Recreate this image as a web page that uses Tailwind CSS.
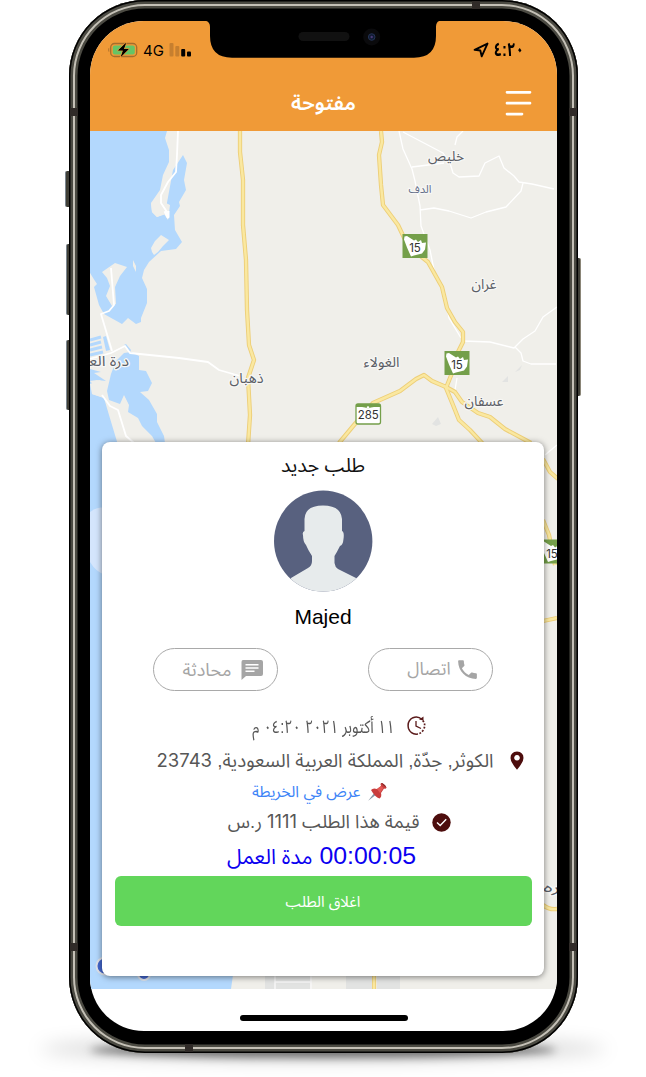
<!DOCTYPE html>
<html lang="ar">
<head>
<meta charset="utf-8">
<title>مفتوحة</title>
<script src="https://cdn.jsdelivr.net/npm/@tailwindcss/browser@4"></script>
</head>
<body class="bg-white">
<main class="relative h-[1077px] w-[646px] overflow-hidden bg-white pl-[69px] font-['Liberation_Sans','Noto_Sans_Arabic','DejaVu_Sans',sans-serif]">
  <!-- ground shadow -->
  <div class="absolute left-[40px] top-[1037px] h-[24px] w-[566px] rounded-[50%] bg-black/15 blur-[9px]"></div>
  <div class="absolute left-[90px] top-[1042px] h-[16px] w-[466px] rounded-[50%] bg-black/50 blur-[4px]"></div>
  <!-- side buttons -->
  <div class="absolute left-[65px] top-[171px] h-[36px] w-[6px] rounded-l-xs border-l border-[#7c8790] bg-[#3f3e36]"></div>
  <div class="absolute left-[66px] top-[244px] h-[71px] w-[5px] rounded-l-xs border-l border-[#7c8790] bg-[#3f3e36]"></div>
  <div class="absolute left-[66px] top-[340px] h-[70px] w-[5px] rounded-l-xs border-l border-[#7c8790] bg-[#3f3e36]"></div>
  <div class="absolute left-[576px] top-[258px] h-[138px] w-[5px] rounded-r-xs border-r border-[#8a8577] bg-[#3f3e36]"></div>

  <div class="relative h-[1053px] w-[509px] rounded-[76px] bg-black px-[21px] pt-[21px] shadow-[inset_0_0_0_1.5px_#000,inset_0_0_0_4px_#4b4a42,inset_0_0_0_6px_#c4c0b6,inset_0_0_0_8.5px_#4b4a42]">
    <!-- antenna bands -->
    <div class="absolute left-[1px] top-[108px] h-[8px] w-[8px] bg-[#302b28]"></div>
    <div class="absolute right-[1px] top-[108px] h-[8px] w-[8px] bg-[#302b28]"></div>
    <div class="absolute left-[1px] top-[943px] h-[8px] w-[8px] bg-[#302b28]"></div>
    <div class="absolute right-[1px] top-[943px] h-[8px] w-[8px] bg-[#302b28]"></div>
    <div class="absolute left-[403px] top-[1px] h-[8px] w-[8px] bg-[#302b28]"></div>
    <div class="absolute left-[116px] top-[1044px] h-[8px] w-[8px] bg-[#302b28]"></div>

    <div class="relative flex h-[1010px] w-[467px] flex-col overflow-hidden rounded-[54px] bg-white">
      <header class="flex h-[110px] flex-col bg-[#f09a37]">
        <!-- status bar -->
        <div class="flex h-[56px] items-center justify-between pl-[18px] pr-[33px]">
          <div class="flex items-center pt-[2px]">
            <svg class="h-[16px] w-[30px]" viewBox="0 0 30 16">
              <path d="M1.200 5.800v4.400C0 9.800 0 6.200 1.200 5.800z" fill="#a56d2c"/>
              <rect x="2.700" y="1.500" width="26" height="13" rx="3.800" fill="none" stroke="#a56d2c" stroke-width="1.300"/>
              <rect x="4.800" y="3.500" width="22" height="9" rx="2" fill="#65c466"/>
              <path d="M18.500 0L9.500 8.700h5.200L12 16l9.300-9.200h-5z" fill="#000" stroke="#f09a37" stroke-width="1"/>
              <path d="M18.300 .8L10 8.500h5L12.800 15l8-8h-5z" fill="#000"/>
            </svg>
            <span class="ml-[5px] text-[15px] leading-none font-['Inter'] text-black">4G</span>
            <svg class="ml-[5px] h-[14px] w-[22px]" viewBox="0 0 22 14">
              <g fill="#c67f2f"><rect x=".5" width="4" height="13.500" rx="1"/><rect x="6.300" y="3" width="4" height="10.500" rx="1"/></g>
              <rect x="12.200" y="6" width="4" height="7.500" rx="1"/><rect x="18" y="8.500" width="4" height="5" rx="1"/>
            </svg>
          </div>
          <div class="flex items-center gap-[7px] pt-[1px]">
            <svg class="h-[16px] w-[16px]" viewBox="0 0 16 16"><path d="M1.600 7.800L14.500 1.600 8.700 14.300 7.300 8.500z" fill="none" stroke="#000" stroke-width="1.900" stroke-linejoin="round"/></svg>
            <span dir="rtl" class="flex w-[28px] origin-right scale-x-[.78] text-[19px] leading-none font-bold whitespace-nowrap text-black">٤:٢٠</span>
          </div>
        </div>
        <div class="relative flex h-[54px] items-center justify-center">
          <h1 dir="rtl" class="-mt-[2px] text-[20.800px] leading-none font-semibold text-white">مفتوحة</h1>
          <svg class="absolute left-[414.500px] top-[13px] h-[27px] w-[27px]" viewBox="0 0 27 27" stroke="#fff" stroke-width="2.700" stroke-linecap="round"><path d="M2 2.300h23M2 13.200h23M2 24.100h15"/></svg>
        </div>
      </header>

      <section class="relative h-[858px] overflow-hidden bg-[#f0efea] pl-[12px] pt-[311px]">
        <svg class="absolute left-0 top-0 h-[858px] w-[467px]" viewBox="90 131 467 858">
          <g fill="#b3d8fd">
            <path d="M90 131H167L165 138 169 150 169 162 163 175 160 190 151 203 152 212 157 217 166 214 166 208 173 170 183 155 187 163 184 180 186 190 179 202 180 206 174 215 175 230 182 242 176 249 161 251 149 262 144 270 142 278 147 289 147 303 141 318 141 322 136 324 128 318 122 324 104 314 99 305 94 287 90 273z"/>
            <path d="M116 361L124 353 131 352 139 356 139 370 146 371 152 383 148 391 140 392 149 400 157 414 157 422 164 436 166 450 135 450 126 446 121 432 109 413 104 404 107 391 111 374z"/>
            <path d="M90 381L98 390 92 394 104 398 109 406 117 422 120 440 120 530 106 975 233 975 231 989H90z"/>
            <path d="M120 440h9v5h-9zM124 345l2-1 5 6-1 2zM103 337l3-1 4 14-4 1zM90 369l11 3-7 1 12 8-9-1-7 1z"/>
          </g>
          <g fill="#f0efea">
            <path d="M90 273L95 281 97 284 93 288 96 302 101 315 90 330z"/>
            <path d="M151 203L152 212 157 217 164 214 168 220 170 205 160 200zM152 252L151 248 155 241 161 235 169 240 163 246 158 252 154 255zM133 260l3 6 0 6-3-6zM102 272L115 263 127 267 120 276 115 287 116 304 112 306 106 296 110 286 107 278z"/>
            <path d="M90 384L100 380 104 386 107 391 109 400 120 404 124 395 129 405 128 412 138 418 142 426 152 436 157 445H118L109 415 104 398 92 394z"/>
          </g>
          <g stroke="#b3d8fd" stroke-width="3"><path d="M90 340l11-3M90 345l11-3M90 350l12-3M90 355l13-3" /></g>
          <path d="M90 512q8-6 14-4v66q-8-2-14-12z" fill="#d4e5fc"/>
          <g fill="none" stroke="#fff" stroke-width="1.600" stroke-linejoin="round">
            <path d="M178 131L177 155 176 172 168 182 161 195 161 203 167 212M111 268l3 37-5 6-8 3 11 37" stroke-width="1.800"/>
            <path d="M90 359l21-6 14-7 5 7 49 5 29 4 11 8 21 6M102 395l8 11 8 4 8 26 8 7" stroke-width="1.800"/>
            <path d="M399 131l4 18 9 20 3 12 5 25 1 20 9 24 5 25 11 25 3 18 12 20M403 132l40 21 7 10 3 10 6 4 20-1 6-13 14-7 5 12 10 8 5 6 13 2 22 5M412 167l32-4M463 131l-6 6-2 8M420 210l14-2 15 3 22 7 15-6 20-5 15-16 2-8M463 341l27 1 24 6 9-9 12-8 8-14 14-10M515 347l6 6 2 8 8 3 25 0M457 378l-2 12M545 455l12-10" stroke-width="1.300"/>
            <path d="M165 211l3 6v-6" stroke-width="3"/>
          </g>
          <g fill="none" stroke-linejoin="round">
            <g stroke="#edce77" stroke-width="4.300">
              <path d="M240 131V152L243 180 243 225 246 260 247 310 249 345 254 360 248 378 250 415 248 445"/>
              <path d="M381 131L382 142 379 155 381 185 383 205 398 225 408 246 428 262 442 287 447 308 455 322 463 332 463 342 458 352 454 368 446 388 453 405 459 420 470 430 483 444"/>
              <path d="M339 443L354 425 373 403 400 391 416 379 424 375 432 381 446 387 455 392 462 402 478 413 490 417 505 429 531 443M543 459l7 13 8 7M543 520l6 15 6 30M543 621l14-3M543 905q6 5 14 4M374 975v14"/>
            </g>
            <g stroke="#fae8a0" stroke-width="2.500">
              <path d="M240 131V152L243 180 243 225 246 260 247 310 249 345 254 360 248 378 250 415 248 445"/>
              <path d="M381 131L382 142 379 155 381 185 383 205 398 225 408 246 428 262 442 287 447 308 455 322 463 332 463 342 458 352 454 368 446 388 453 405 459 420 470 430 483 444"/>
              <path d="M339 443L354 425 373 403 400 391 416 379 424 375 432 381 446 387 455 392 462 402 478 413 490 417 505 429 531 443M543 459l7 13 8 7M543 520l6 15 6 30M543 621l14-3M543 905q6 5 14 4M374 975v14"/>
            </g>
          </g>
          <g fill="#e2e3e2"><path d="M432 424l6-7 3 7-5 2zM502 382l6-6v6zM515 372l7-7-2 5zM265 975h45v14H265zM346 975h26v14h-26zM377 975h23v14h-23z"/></g>
          <g stroke="#f7f7f7" stroke-width="1.500"><path d="M275 975v14M311 975v14M275 982h36"/></g>
          <!-- route 15 shields -->
          <g id="shield"><rect x="402.500" y="234" width="25" height="24" fill="#749f4a"/><path d="M404.500 236.500l2.500-.5 7 4.500 2-1 2 2.500 3-2 1 3 4-.500-1 7-3 4-8 2-3 1-4-9-3-8z" fill="#fff"/><text x="415" y="252" font-size="11.500" font-family="Inter" text-anchor="middle" fill="#333">15</text></g>
          <use href="#shield" x="42" y="117"/>
          <use href="#shield" x="137" y="305.500"/>
          <rect x="356" y="404" width="24.500" height="20" rx="2" fill="#fff" stroke="#749f4a" stroke-width="1.300"/><path d="M356 404h24v3h-6q-3 0-6 1.500-3-1.500-6-1.500h-6z" fill="#749f4a"/><circle cx="368" cy="407.500" r="1.300" fill="#fff"/>
          <text x="368.300" y="419" font-size="11.500" font-family="Inter" text-anchor="middle" fill="#333">285</text>
          <g font-family="'Noto Sans Arabic','DejaVu Sans',sans-serif" font-size="14" fill="#5b5e66" stroke="#f7f7f5" stroke-width="2.500" paint-order="stroke" stroke-linejoin="round" text-anchor="middle">
            <text x="446" y="161" textLength="36" lengthAdjust="spacingAndGlyphs">خليص</text>
            <text x="420" y="193" font-size="11" fill="#66708a" textLength="23" lengthAdjust="spacingAndGlyphs">الدف</text>
            <text x="484" y="289" textLength="25" lengthAdjust="spacingAndGlyphs">غران</text>
            <text x="381.500" y="367" textLength="36" lengthAdjust="spacingAndGlyphs">الغولاء</text>
            <text x="484" y="406" textLength="39" lengthAdjust="spacingAndGlyphs">عسفان</text>
            <text x="246.500" y="383" textLength="34" lengthAdjust="spacingAndGlyphs">ذهبان</text>
            <text x="106" y="366" textLength="46" lengthAdjust="spacingAndGlyphs">درة العر</text>
            <text x="555" y="892" textLength="24" lengthAdjust="spacingAndGlyphs">بره</text>
          </g>
          <g fill="#4468d0" stroke="#e0e4ec" stroke-width="2"><circle cx="105" cy="966" r="8.500"/><circle cx="144" cy="974" r="6"/></g>
        </svg>

        <article class="relative flex h-[534px] w-[442px] flex-col rounded-[8px] bg-white px-[12.500px] shadow-[0_1px_6px_rgba(0,0,0,0.5)]">
          <h2 dir="rtl" class="flex h-[48px] items-center justify-center text-[19.500px] leading-none text-[#111]">طلب جديد</h2>
          <svg class="h-[102px] w-[99px] self-center" viewBox="0 0 99 102">
            <clipPath id="av"><ellipse cx="49.200" cy="51" rx="49.200" ry="50.500"/></clipPath>
            <g clip-path="url(#av)"><rect width="99" height="102" fill="#58617f"/>
            <path d="M17 88L34 78Q38 76 38 71V66Q34 60 32 55 29 52 29 45 28 42 30.500 41V29Q31 15.500 49 15.500T68 29V41Q70.500 42 69.500 49 69 55 66 56 63 62 60.500 66V73Q61 77 64 79L82 88 82 102H17z" fill="#e7ebec"/></g>
          </svg>
          <p class="flex h-[48px] items-center justify-center text-[21px] leading-none text-black">Majed</p>
          <div class="mt-[8px] flex h-[43px] justify-between pl-[38.500px] pr-[38.500px]">
            <button class="flex h-[43px] w-[125px] items-center rounded-full border border-[#a9a9a9] pl-[27px] text-[#a5a5a5]">
              <span dir="rtl" class="w-[52px] text-[18px] leading-none whitespace-nowrap">محادثة</span>
              <svg class="ml-[8px] h-[22px] w-[22px]" viewBox="0 0 22 22"><path d="M2 1h18q2 0 2 2v12q0 2-2 2H5l-4.500 4V3q0-2 1.500-2z" fill="#a5a5a5"/><path d="M4.500 5.700h13M4.500 9h13M4.500 12.300h9" stroke="#fff" stroke-width="1.400"/></svg>
            </button>
            <button class="flex h-[43px] w-[125px] items-center rounded-full border border-[#a9a9a9] pl-[38px] text-[#a5a5a5]">
              <span dir="rtl" class="w-[44px] text-[17.500px] leading-none whitespace-nowrap">اتصال</span>
              <svg class="ml-[4px] h-[25px] w-[25px]" viewBox="0 0 24 24"><path d="M6.620 10.790c1.440 2.830 3.760 5.140 6.590 6.590l2.200-2.200c.27-.27.67-.36 1.020-.24 1.120.37 2.330.57 3.570.57.55 0 1 .45 1 1V20c0 .55-.45 1-1 1-9.390 0-17-7.610-17-17 0-.55.45-1 1-1h3.500c.55 0 1 .45 1 1 0 1.250.2 2.450.57 3.570.11.35.03.74-.25 1.020z" fill="#a5a5a5"/></svg>
            </button>
          </div>
          <div dir="rtl" class="mt-[17px] flex h-[34px] items-center gap-[12px] ps-[106px] text-[17px] leading-none whitespace-nowrap text-[#575757]">
            <svg class="h-[19px] w-[19px]" viewBox="0 0 19 19" fill="none" stroke="#5a1a1a"><path d="M11 18Q4 19 1.500 12.500-.3 5 6 1.700 11-.3 15 3.500" stroke-width="1.500"/><path d="M15.700 4.500Q19.500 9 16 14.500 14 17.300 11 18" stroke-width="1.700" stroke-dasharray="1.800 1.600"/><path d="M9 5v5l5 2.500" stroke-width="1.300"/><path d="M12 3.500l4.500 1V.5z" fill="#5a1a1a" stroke="none"/></svg>
            <span class="mt-[3px] origin-right scale-x-[.81] text-[18px]">١١ أكتوبر ٢٠٢١ ٠٤:٢٠ م</span>
          </div>
          <div dir="rtl" class="flex h-[37px] items-center gap-[16px] ps-[8px] text-[18.800px] leading-none whitespace-nowrap text-[#575757]">
            <svg class="h-[19px] w-[14px]" viewBox="0 0 14 19"><path d="M7 .5Q13.500 1 13.500 7 13.500 11 7 18.800.5 11 .5 7 .5 1 7 .5zM7 4a2.800 2.800 0 1 0 .01 0z" fill="#4d0d0d" fill-rule="evenodd"/></svg>
            <span>الكوثر, جدّة, المملكة العربية السعودية, <span class="font-['Inter'] text-[18.500px]">23743</span></span>
          </div>
          <a dir="rtl" class="flex h-[25px] items-center gap-[7px] ps-[145px] text-[15.700px] leading-none whitespace-nowrap text-[#3d84f7]">
            <svg class="h-[19px] w-[19px]" viewBox="0 0 19 19"><path d="M.2 18.800L7 10l2 2z" fill="#8493a2"/><path d="M13 1q3 0 5.500 4.500-.5 2-2.500 1l-3 4.500q1 4-1.500 5.500Q7 15 3 8q2-2.500 6-1L13 4q-1-2 0-3z" fill="#c93d3d"/><path d="M9 7l3 4 3.500-5L13 4z" fill="#e25a56"/><path d="M13 1q3 0 5.500 4.500L16 4z" fill="#852a2a"/></svg>
            <span>عرض في الخريطة</span>
          </a>
          <div dir="rtl" class="flex h-[36px] items-center gap-[12px] ps-[81px] text-[18.400px] leading-none whitespace-nowrap text-[#575757]">
            <svg class="h-[19px] w-[19px]" viewBox="0 0 19 19"><circle cx="9.500" cy="9.500" r="9.200" fill="#4d0d0d"/><path d="M5 9.500l3.200 3 6-6.200" fill="none" stroke="#fff" stroke-width="1.400"/></svg>
            <span>قيمة هذا الطلب <span class="font-['Inter']">1111</span> ر.س</span>
          </div>
          <p class="flex h-[32px] items-center gap-[7px] pl-[113px] text-[24.800px] leading-none whitespace-nowrap text-[#0b00f0]"><span dir="rtl" class="w-[85px] text-[21px]">مدة العمل</span><span>00:00:05</span></p>
          <button dir="rtl" class="mt-[4px] flex h-[50px] w-[417px] items-center justify-center rounded-[6px] bg-[#62d65b] text-[15px] leading-none text-white">اغلاق الطلب</button>
        </article>
      </section>

      <footer class="flex h-[42px] justify-center pt-[26px]"><div class="h-[6px] w-[168px] rounded-full bg-black"></div></footer>

      <!-- notch -->
      <svg class="absolute left-[110px] top-0 h-[37px] w-[246px]" viewBox="200 21 246 37">
        <path d="M200 20.500H203Q210 20.500 210 27V36Q210 57.700 232 57.700H414Q436 57.700 436 36V27Q436 20.500 442 20.500H446z"/>
        <rect x="298.500" y="32" width="51" height="9" rx="4.500" fill="#111"/>
        <circle cx="371.700" cy="37" r="8.500" fill="#0a0a0c"/><circle cx="371.700" cy="37" r="3.300" fill="#111b33" stroke="#243354"/><circle cx="371.700" cy="37" r="1.200" fill="#4b3b78"/>
      </svg>
    </div>
  </div>
</main>
</body>
</html>
